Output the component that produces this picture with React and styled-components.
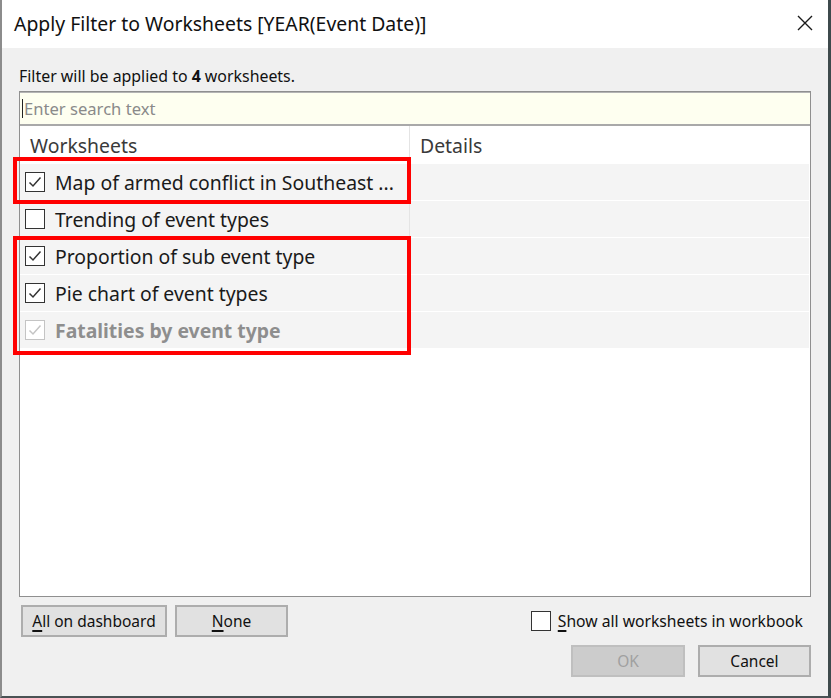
import React from "react";
import styled, { createGlobalStyle } from "styled-components";

const Global = createGlobalStyle`
  html, body { margin: 0; padding: 0; background: #3e4a4c; }
  body { font-family: "Noto Sans", "Open Sans", sans-serif; }
  * { box-sizing: border-box; }
`;

const Window = styled.div`
  position: relative;
  width: 831px;
  height: 698px;
  display: flex;
  flex-direction: column;
  background: #f0f0f0;
  border-left: 2px solid #8c8c8c;
  border-right: 3px solid #3e4a4c;
  border-bottom: 2px solid #4a5254;
  font-family: "Noto Sans", "Open Sans", sans-serif;
  color: #1a1a1a;
`;

const TitleBar = styled.div`
  height: 48px;
  flex: none;
  background: #ffffff;
  display: flex;
  align-items: center;
  justify-content: space-between;
  padding: 0 14px 2px 12px;
`;

const Title = styled.div`
  font-size: 19.4px;
  color: #111;
  white-space: nowrap;
`;

const CloseBtn = styled.div`
  width: 18px;
  height: 18px;
  display: flex;
  align-items: center;
  justify-content: center;
`;

const Body = styled.div`
  flex: 1;
  display: flex;
  flex-direction: column;
  padding: 18px 17px 0 17px;
`;

const Info = styled.div`
  font-size: 15.9px;
  line-height: 20px;
  height: 20px;
  color: #111;
  margin-bottom: 5px;
  b { font-weight: 700; }
`;

const Frame = styled.div`
  height: 506px;
  border: 1px solid #8f8f8f;
  background: #ffffff;
  display: flex;
  flex-direction: column;
`;

const Search = styled.div`
  height: 34px;
  flex: none;
  background: #fefff0;
  border-bottom: 2px solid #a9a9a9;
  border-top: 1px solid #b4b4b4;
  display: flex;
  align-items: center;
  padding-left: 2px;
  font-size: 16.6px;
  color: #8a8a8a;
`;

const Caret = styled.span`
  display: inline-block;
  width: 1px;
  height: 19px;
  background: #222;
  margin-right: 1px;
`;

const Grid = styled.div`
  display: grid;
  grid-template-columns: 390px 1fr;
  height: ${(p) => p.$h}px;
  margin-bottom: ${(p) => (p.$gap ? 1 : 0)}px;
  background: ${(p) => p.$bg};
  margin-right: 1px;
`;

const Cell = styled.div`
  display: flex;
  align-items: center;
  gap: 10px;
  padding-left: ${(p) => p.$pl}px;
  border-right: ${(p) => (p.$divider ? "1px solid #e4e4e4" : "none")};
  font-size: 19.4px;
  font-weight: ${(p) => (p.$disabled ? 700 : 400)};
  color: ${(p) => (p.$disabled ? "#8e8e8e" : p.$header ? "#3a3a3a" : "#1a1a1a")};
  white-space: nowrap;
  overflow: hidden;
`;

const Box = styled.span`
  width: 20px;
  height: 20px;
  flex: none;
  border: 1.5px solid ${(p) => (p.$disabled ? "#c4c4c4" : "#333333")};
  background: #fff;
  display: flex;
  align-items: center;
  justify-content: center;
`;

const Bottom = styled.div`
  display: flex;
  flex-direction: column;
  gap: 8px;
  padding-top: 8px;
`;

const ButtonRow = styled.div`
  display: flex;
  align-items: center;
  justify-content: ${(p) => p.$justify};
  gap: ${(p) => p.$gap}px;
  padding-left: ${(p) => p.$pl}px;
  padding-right: ${(p) => p.$pr}px;
`;

const Group = styled.div`
  display: flex;
  gap: 8px;
`;

const Button = styled.div`
  width: ${(p) => p.$w}px;
  height: 32px;
  display: flex;
  align-items: center;
  justify-content: center;
  background: ${(p) => (p.$disabled ? "#cccccc" : "#e1e1e1")};
  border: 2px solid ${(p) => (p.$disabled ? "#bfbfbf" : "#adadad")};
  color: ${(p) => (p.$disabled ? "#a0a0a0" : "#111")};
  font-size: 15.5px;
  u { text-decoration-thickness: 1.5px; text-underline-offset: 3px; }
`;

const CheckLabel = styled.label`
  display: flex;
  align-items: center;
  gap: 7px;
  font-size: 15.7px;
  color: #111;
  u { text-decoration-thickness: 1.5px; text-underline-offset: 3px; }
`;

const Highlight = styled.div`
  position: absolute;
  left: 11px;
  top: ${(p) => p.$top}px;
  width: 398px;
  height: ${(p) => p.$h}px;
  border: 4px solid #ff0000;
  pointer-events: none;
`;

const Check = ({ color }) => (
  <svg width="14" height="14" viewBox="0 0 14 14">
    <polyline points="1.5,7.5 5,11 12.5,2.5" fill="none" stroke={color} strokeWidth="1.5" />
  </svg>
);

const CheckBox = ({ checked, disabled }) => (
  <Box $disabled={disabled}>
    {checked && <Check color={disabled ? "#c4c4c4" : "#333"} />}
  </Box>
);

const rows = [
  { name: "Map of armed conflict in Southeast ...", checked: true },
  { name: "Trending of event types", checked: false },
  { name: "Proportion of sub event type", checked: true },
  { name: "Pie chart of event types", checked: true },
  { name: "Fatalities by event type", checked: true, disabled: true },
];

export default function App() {
  return (
    <>
      <Global />
      <Window>
        <TitleBar>
          <Title>Apply Filter to Worksheets [YEAR(Event Date)]</Title>
          <CloseBtn>
            <svg width="16" height="16" viewBox="0 0 16 16">
              <path d="M1 1 L15 15 M15 1 L1 15" stroke="#1a1a1a" strokeWidth="1.4" />
            </svg>
          </CloseBtn>
        </TitleBar>
        <Body>
          <Info>
            Filter will be applied to <b>4</b> worksheets.
          </Info>
          <Frame>
            <Search>
              <Caret />
              Enter search text
            </Search>
            <Grid $h={38} $bg="#ffffff">
              <Cell $pl={10} $divider $header>Worksheets</Cell>
              <Cell $pl={10} $header>Details</Cell>
            </Grid>
            {rows.map((r) => (
              <Grid key={r.name} $h={36} $gap $bg="#f4f4f4">
                <Cell $pl={5} $divider $disabled={r.disabled}>
                  <CheckBox checked={r.checked} disabled={r.disabled} />
                  {r.name}
                </Cell>
                <Cell $pl={10} />
              </Grid>
            ))}
          </Frame>
          <Bottom>
            <ButtonRow $justify="space-between" $pl={2} $pr={8}>
              <Group>
                <Button $w={146}>
                  <span><u>A</u>ll on dashboard</span>
                </Button>
                <Button $w={113}>
                  <span><u>N</u>one</span>
                </Button>
              </Group>
              <CheckLabel>
                <CheckBox checked={false} />
                <span><u>S</u>how all worksheets in workbook</span>
              </CheckLabel>
            </ButtonRow>
            <ButtonRow $justify="flex-end" $gap={13} $pl={0} $pr={0}>
              <Button $w={114} $disabled>OK</Button>
              <Button $w={113}>Cancel</Button>
            </ButtonRow>
          </Bottom>
        </Body>
        <Highlight $top={157} $h={47} />
        <Highlight $top={236} $h={119} />
      </Window>
    </>
  );
}
